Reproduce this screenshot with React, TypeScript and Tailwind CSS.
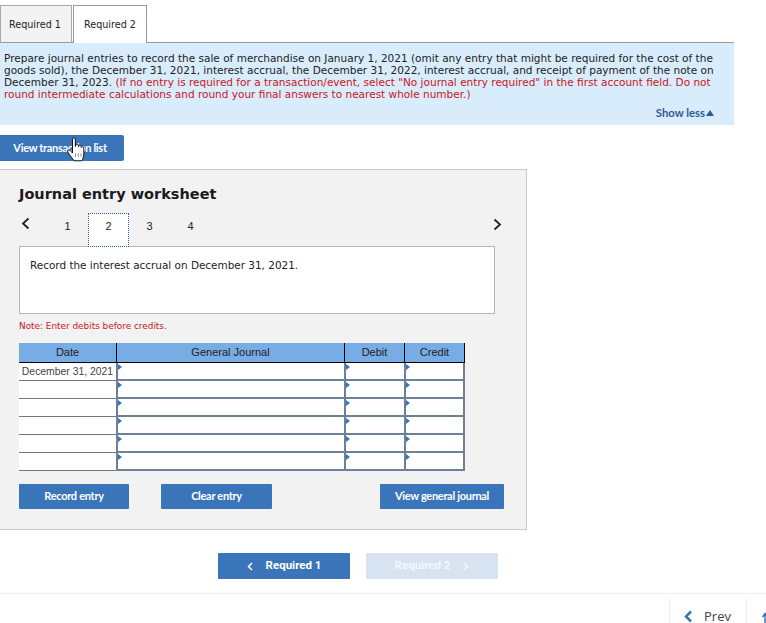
const verdana = "font-['DejaVu_Sans',sans-serif]";

const steps = ["1", "2", "3", "4"];
const rows = ["December 31, 2021", "", "", "", "", ""];

function Marker() {
  return <span className="absolute left-0 top-[1px] h-0 w-0 border-y-[3px] border-l-[4px] border-y-transparent border-l-[#3a75ba]" />;
}

function EntryCell({ width }: { width: string }) {
  return (
    <div className={`relative h-[18px] border-b-2 border-l-2 border-[#6f7f96] bg-white ${width}`}>
      <Marker />
    </div>
  );
}

function HandCursor() {
  return (
    <svg className="absolute left-[66px] top-[136px]" width="22" height="27" viewBox="0 0 22 27">
      <path
        d="M6.500 3c0-1.800 2.800-1.800 2.800 0v7.500l.6-1.500c.4-1.200 2.500-1 2.500.5v1.200l.4-.8c.5-1.100 2.400-.8 2.400.6v1l.3-.4c.6-1 2.300-.6 2.300.7v6c0 3-1 5.500-2 7H8c-1.500-2-2.800-4-4.500-6L1.700 16c-.8-1.500 1-2.700 2.300-1.600L6.500 17Z"
        fill="#fff"
        stroke="#111"
        strokeWidth="1"
        strokeLinejoin="round"
      />
      <path d="M9.500 17v4M12.300 17v4M15 17v4" stroke="#555" strokeWidth="0.600" />
    </svg>
  );
}

export default function App() {
  return (
    <div className={`relative h-[623px] w-[766px] overflow-hidden bg-white ${verdana}`}>
      <div className="flex h-[43px] w-[734px] items-end gap-px border-b border-[#999] pt-[5px]">
        <div className="flex h-[37px] w-[72px] items-center justify-center border border-b-0 border-[#aaa] bg-[#f3f3f3] pr-[2px] pt-[2px] text-[9.600px] text-[#222]">
          Required 1
        </div>
        <div className="z-10 -mb-px flex h-[38px] w-[74px] items-center justify-center border border-b-0 border-[#999] bg-white pt-[2px] text-[9.600px] text-[#222]">
          Required 2
        </div>
      </div>

      <div className="relative h-[82px] w-[734px] bg-[#d9ecfb] pl-1 pt-[9px] text-[10.520px] leading-[12px] text-[#222]">
        <p className="w-[716px]">
          Prepare journal entries to record the sale of merchandise on January 1, 2021 (omit any entry that might be required for the cost of the goods sold), the December 31, 2021, interest accrual, the December 31, 2022, interest accrual, and receipt of payment of the note on December 31, 2023.{" "}
          <span className="text-[#c8161d]">
            (If no entry is required for a transaction/event, select "No journal entry required" in the first account field. Do not round intermediate calculations and round your final answers to nearest whole number.)
          </span>
        </p>
        <div className="absolute bottom-[6px] right-[20px] flex items-center gap-px font-['Lato',sans-serif] text-[11.300px] font-bold leading-[13px] text-[#2c5a94]">
          Show less
          <span className="h-0 w-0 border-x-[4px] border-b-[6px] border-x-transparent border-b-[#2c5a94]" />
        </div>
      </div>

      <button className="mt-[10px] block h-[26px] w-[124px] rounded-r-[2px] bg-[#3a75ba] pr-[4px] font-['Lato',sans-serif] text-[11px] font-bold tracking-[-0.3px] text-white">
        View transaction list
      </button>
      <HandCursor />

      <div className="mt-2 h-[361px] w-[527px] border-y border-r border-[#c8c8c8] bg-[#f2f2f2] pl-[19px]">
        <h2 className="mt-[15px] text-[14.500px] font-bold leading-[18px] text-[#1a1a1a]">Journal entry worksheet</h2>

        <div className="relative mt-[10px] flex h-[34px] w-[476px] items-center font-['Liberation_Sans',sans-serif] text-[11px] text-[#222]">
          <svg className="absolute left-[2px] top-[4px]" width="9" height="13" viewBox="0 0 9 13">
            <path d="M7.500 1.500 2 6.500l5.500 5" fill="none" stroke="#222" strokeWidth="1.800" />
          </svg>
          <div className="ml-[28px] flex">
            {steps.map((step) => (
              <span
                key={step}
                className={
                  step === "2"
                    ? "z-10 flex h-[34px] w-[41px] items-center justify-center border border-dotted border-[#2c5fa8] bg-white pb-[8px]"
                    : "flex h-[34px] w-[41px] items-center justify-center pb-[8px]"
                }
              >
                {step}
              </span>
            ))}
          </div>
          <svg className="absolute right-[-7px] top-[5px]" width="9" height="13" viewBox="0 0 9 13">
            <path d="M1.500 1.500 7 6.500l-5.500 5" fill="none" stroke="#222" strokeWidth="1.800" />
          </svg>
        </div>

        <div className="-mt-px h-[68px] w-[476px] border border-[#b5b5b5] bg-white pl-[10px] pt-[12px] text-[10.450px] leading-[12px] text-[#222]">
          Record the interest accrual on December 31, 2021.
        </div>

        <p className="mt-[6px] text-[8.900px] leading-[12px] text-[#c8161d]">Note: Enter debits before credits.</p>

        <div className="mt-[11px] w-[446px] font-['Liberation_Sans',sans-serif] text-[11px]">
          <div className="flex h-[20px] border-b border-black bg-[#78ace4] text-[#222]">
            <span className="flex w-[98px] items-center justify-center border-r border-black">Date</span>
            <span className="flex w-[228px] items-center justify-center border-r border-black">General Journal</span>
            <span className="flex w-[60px] items-center justify-center border-r border-black">Debit</span>
            <span className="flex w-[60px] items-center justify-center border-r border-black">Credit</span>
          </div>
          {rows.map((date, i) => (
            <div key={i} className="flex h-[18px]">
              <span className="flex w-[97px] items-center justify-center border-b border-[#777] bg-white text-[10.400px] text-[#444]">{date}</span>
              <EntryCell width="w-[228px]" />
              <EntryCell width="w-[60px]" />
              <div className="relative h-[18px] w-[61px] border-x-2 border-b-2 border-[#6f7f96] bg-white">
                <Marker />
              </div>
            </div>
          ))}
        </div>

        <div className="mt-[13px] flex w-[485px] gap-8 font-['Lato',sans-serif] text-[11px] font-bold tracking-[-0.3px] text-white">
          <button className="h-[25px] w-[110px] rounded-[1px] bg-[#3a75ba]">Record entry</button>
          <button className="h-[25px] w-[111px] rounded-[1px] bg-[#3a75ba]">Clear entry</button>
          <button className="ml-auto h-[25px] w-[124px] rounded-[1px] bg-[#3a75ba]">View general journal</button>
        </div>
      </div>

      <div className="ml-[218px] mt-[23px] flex gap-4 font-['Roboto',sans-serif] text-[11.500px] font-bold text-white">
        <button className="flex h-[26px] w-[132px] items-center justify-center gap-[13px] rounded-[1px] bg-[#3a75ba]">
          <svg width="6" height="9" viewBox="0 0 6 9">
            <path d="M5 1 1.500 4.500 5 8" fill="none" stroke="#fff" strokeWidth="1.500" />
          </svg>
          Required 1
        </button>
        <button className="flex h-[26px] w-[132px] items-center justify-center gap-[13px] rounded-[1px] bg-[#d8e3f1] text-[#f3f7fb]">
          Required 2
          <svg width="6" height="9" viewBox="0 0 6 9">
            <path d="M1 1 4.500 4.500 1 8" fill="none" stroke="#f3f7fb" strokeWidth="1.500" />
          </svg>
        </button>
      </div>

      <div className="mt-[14px] flex h-[30px] justify-end border-t border-[#eee] font-['Open_Sans',sans-serif] text-[13px] text-[#444]">
        <div className="mt-1 flex h-[26px] w-[77px] items-start gap-[11px] border-l border-[#eee] pl-[14px] pt-[9px]">
          <svg className="mt-[3px]" width="9" height="13" viewBox="0 0 9 13">
            <path d="M7 1.500 2 6.500l5 5" fill="none" stroke="#3a75ba" strokeWidth="2.500" />
          </svg>
          <span className="leading-[19px]">Prev</span>
        </div>
        <div className="mt-1 h-[26px] w-[20px] border-l border-[#eee] pl-[15px] pt-[14px]">
          <svg width="6" height="16" viewBox="0 0 6 16">
            <path d="M3 16V2M0.500 5 3 1.500 5.500 5" fill="none" stroke="#3a75ba" strokeWidth="1.500" />
          </svg>
        </div>
      </div>
    </div>
  );
}
